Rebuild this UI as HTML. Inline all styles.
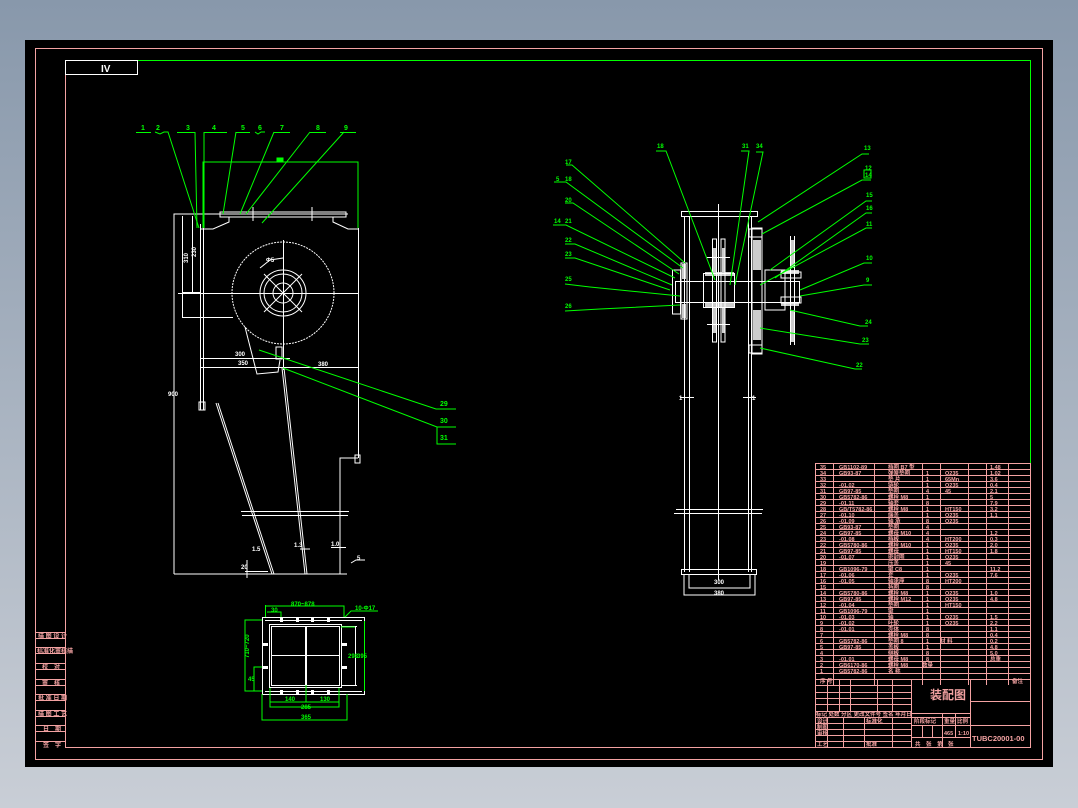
<!DOCTYPE html>
<html><head><meta charset="utf-8"><style>
html,body{margin:0;padding:0;width:1078px;height:808px;overflow:hidden}
svg{display:block}
text{font-family:"Liberation Sans","Noto Sans CJK SC",sans-serif;font-weight:bold}
</style></head><body>
<svg width="1078" height="808" viewBox="0 0 1078 808" xmlns="http://www.w3.org/2000/svg">
<defs>
<linearGradient id="bg" x1="0" y1="0" x2="0" y2="1">
<stop offset="0" stop-color="#8898ab"/><stop offset="1" stop-color="#c9ced6"/>
</linearGradient>
<pattern id="rows" x="0" y="463" width="10" height="6" patternUnits="userSpaceOnUse">
<line x1="0" y1="0.5" x2="10" y2="0.5" stroke="#f4a3a3" stroke-width="1"/>
</pattern>
</defs>
<rect width="1078" height="808" fill="url(#bg)"/>
<rect x="25" y="40" width="1028" height="727" fill="#000"/>
<rect x="35.5" y="48.5" width="1007" height="711" fill="none" stroke="#f4a3a3" stroke-width="1"/>
<line x1="65.5" y1="60" x2="65.5" y2="747" stroke="#f4a3a3"/>
<line x1="65" y1="747.5" x2="1030" y2="747.5" stroke="#f4a3a3"/>
<line x1="1030.5" y1="60" x2="1030.5" y2="747" stroke="#00ff00"/>
<line x1="65" y1="60.5" x2="1031" y2="60.5" stroke="#00ff00"/>
<rect x="65.5" y="60.5" width="72" height="14" fill="none" stroke="#fff"/>
<text x="101" y="72" font-size="10" fill="#fff">IV</text>

<g stroke="#f4a3a3" fill="none">
<line x1="35" y1="632.5" x2="65" y2="632.5"/><line x1="35" y1="638.5" x2="65" y2="638.5"/>
<line x1="35" y1="647.5" x2="65" y2="647.5"/><line x1="35" y1="653.5" x2="65" y2="653.5"/>
<line x1="35" y1="663.5" x2="65" y2="663.5"/><line x1="35" y1="669.5" x2="65" y2="669.5"/>
<line x1="35" y1="679.5" x2="65" y2="679.5"/><line x1="35" y1="685.5" x2="65" y2="685.5"/>
<line x1="35" y1="694.5" x2="65" y2="694.5"/><line x1="35" y1="700.5" x2="65" y2="700.5"/>
<line x1="35" y1="710.5" x2="65" y2="710.5"/><line x1="35" y1="716.5" x2="65" y2="716.5"/>
<line x1="35" y1="725.5" x2="65" y2="725.5"/><line x1="35" y1="731.5" x2="65" y2="731.5"/>
<line x1="35" y1="741.5" x2="65" y2="741.5"/>
</g>
<g font-size="6" fill="#f4a3a3">
<text x="38" y="638">描 图 设 计</text><text x="37" y="653">标准化审核描</text>
<text x="42" y="669">校　对</text><text x="42" y="685">审　核</text>
<text x="38" y="700">批 准 日 期</text><text x="38" y="716">描 图 工 艺</text>
<text x="43" y="731">日　期</text><text x="43" y="747">签　字</text>
</g>

<g stroke="#fff" fill="none" stroke-width="1">
<polyline points="174,574 174,214 348,214"/>
<line x1="174" y1="574" x2="347" y2="574"/>
<rect x="220" y="212" width="126" height="5"/>
<line x1="253" y1="207" x2="253" y2="221"/><line x1="312" y1="207" x2="312" y2="221"/>
<polyline points="229,217 229,222 213,229 200,229"/>
<polyline points="333,217 333,222 348,229 358,229"/>
<line x1="358.5" y1="228" x2="358.5" y2="458"/>
<polyline points="358,458 340,458 340,574"/>
<rect x="355" y="455" width="5" height="8"/>
<line x1="200.5" y1="224" x2="200.5" y2="410"/><line x1="203.5" y1="224" x2="203.5" y2="410"/>
<rect x="199" y="402" width="6" height="8"/>
<line x1="182.5" y1="216" x2="182.5" y2="317"/>
<line x1="182" y1="292.5" x2="200" y2="292.5"/>
<line x1="182" y1="317.5" x2="233" y2="317.5"/>
<line x1="192.5" y1="216" x2="192.5" y2="293"/>
<circle cx="283" cy="293" r="51" stroke-dasharray="2 1"/>
<circle cx="283" cy="293" r="23"/><circle cx="283" cy="293" r="19"/>
<circle cx="283" cy="293" r="10"/>
<line x1="264" y1="274" x2="302" y2="312"/><line x1="302" y1="274" x2="264" y2="312"/>
<line x1="178" y1="293.5" x2="358" y2="293.5"/>
<line x1="283.5" y1="240" x2="283.5" y2="370"/>
<polyline points="260,268 270,260 283,258"/>
<line x1="200" y1="358.5" x2="290" y2="358.5"/>
<line x1="200" y1="367.5" x2="358" y2="367.5"/>
<rect x="276" y="347" width="6" height="12"/>
<polyline points="245,327 257,374 278,372 280,360"/>
<line x1="216" y1="403" x2="272" y2="574"/><line x1="218" y1="403" x2="274" y2="574"/>
<line x1="282" y1="368" x2="305" y2="574"/><line x1="284" y1="368" x2="307" y2="574"/>
<line x1="241" y1="511.5" x2="349" y2="511.5"/><line x1="242" y1="515.5" x2="348" y2="515.5"/>
<line x1="300" y1="549" x2="310" y2="549"/><line x1="331" y1="547.5" x2="346" y2="547.5"/>
<line x1="245" y1="571.5" x2="268" y2="571.5"/><line x1="247" y1="560" x2="247" y2="578"/>
<polyline points="351,563 356,560 365,560"/>
</g>
<g font-size="6" fill="#fff">
<text x="185" y="260" transform="rotate(-90 188 260)">310</text>
<text x="193" y="254" transform="rotate(-90 196 254)">230</text>
<text x="266" y="262">Φ5</text><text x="235" y="356">300</text><text x="238" y="365">350</text>
<text x="318" y="366">380</text><text x="168" y="396">900</text>
<text x="252" y="551">1.5</text><text x="294" y="547">1.3</text><text x="331" y="546">1.0</text>
<text x="241" y="569">20</text><text x="357" y="560">5</text>
</g>
<g stroke="#00ff00" fill="none" stroke-width="1">
<polyline points="203,228 203,162 358,162 358,228"/>
<rect x="277" y="158" width="6" height="4" fill="#00ff00"/>
<line x1="136" y1="132.5" x2="151" y2="132.5"/><polyline points="155,132 160,134 164,132 168,132 199,228"/>
<line x1="177" y1="132.5" x2="195" y2="132.5"/><line x1="195" y1="132" x2="197" y2="228"/>
<line x1="204" y1="132.5" x2="227" y2="132.5"/><line x1="204" y1="132" x2="204" y2="228"/>
<line x1="236" y1="132.5" x2="250" y2="132.5"/><polyline points="255,132 258,134 261,132 265,132"/>
<line x1="236" y1="132" x2="223" y2="214"/>
<line x1="274" y1="132.5" x2="290" y2="132.5"/><line x1="274" y1="132" x2="240" y2="214"/>
<line x1="310" y1="132.5" x2="326" y2="132.5"/><line x1="310" y1="132" x2="246" y2="214"/>
<line x1="340" y1="132.5" x2="356" y2="132.5"/><line x1="344" y1="132" x2="262" y2="223"/>
<polyline points="259,350 436,409 456,409"/>
<polyline points="283,368 437,427 456,427"/>
<polyline points="437,427 437,444 456,444"/>
</g>
<g font-size="7" fill="#00ff00">
<text x="141" y="130">1</text><text x="156" y="130">2</text><text x="186" y="130">3</text>
<text x="212" y="130">4</text><text x="241" y="130">5</text><text x="258" y="130">6</text>
<text x="280" y="130">7</text><text x="316" y="130">8</text><text x="344" y="130">9</text>
<text x="440" y="406">29</text><text x="440" y="423">30</text><text x="440" y="440">31</text>
</g>

<g stroke="#fff" fill="none">
<rect x="262.5" y="617.5" width="102" height="77"/>
<line x1="265" y1="620.5" x2="362" y2="620.5"/><line x1="265" y1="691.5" x2="362" y2="691.5"/>
<rect x="269.5" y="624.5" width="72" height="63"/>
<rect x="271.5" y="626.5" width="68" height="59"/>
<line x1="305.5" y1="626" x2="305.5" y2="686"/><line x1="306.5" y1="626" x2="306.5" y2="686"/>
<line x1="271" y1="655.5" x2="340" y2="655.5"/>
<line x1="341" y1="626.5" x2="357" y2="626.5"/><line x1="355.5" y1="626" x2="355.5" y2="685"/>
<line x1="341" y1="685.5" x2="357" y2="685.5"/>
</g>
<g fill="#fff">
<rect x="280" y="617" width="3" height="5"/><rect x="296" y="617" width="3" height="5"/><rect x="311" y="617" width="3" height="5"/><rect x="327" y="617" width="3" height="5"/>
<rect x="280" y="690" width="3" height="5"/><rect x="296" y="690" width="3" height="5"/><rect x="311" y="690" width="3" height="5"/><rect x="327" y="690" width="3" height="5"/>
<rect x="263" y="643" width="5" height="3"/><rect x="263" y="666" width="5" height="3"/>
<rect x="342" y="643" width="5" height="3"/><rect x="342" y="666" width="5" height="3"/>
</g>
<g stroke="#00ff00" fill="none">
<polyline points="265,606 344,606 344,617"/><line x1="265.5" y1="605" x2="265.5" y2="617"/>
<polyline points="267,612 281,612 281,617"/>
<polyline points="345,617 351,611 378,611"/>
<polyline points="262,620 245,620 245,691 262,691"/>
<polyline points="262,667 254,667 254,691"/>
<polyline points="341,627 355,627"/>
<line x1="364.5" y1="621" x2="364.5" y2="691"/>
<polyline points="270,688 270,707 339,707 339,688"/>
<polyline points="270,702 339,702"/>
<polyline points="262,694 262,720 347,720 347,694"/>
<line x1="306" y1="685" x2="306" y2="702"/>
</g>
<g font-size="6" fill="#00ff00">
<text x="291" y="606">870~878</text><text x="271" y="612">30</text><text x="355" y="610">10-Φ17</text>
<text x="241" y="660" transform="rotate(-90 244 655)">710~720</text>
<text x="248" y="681">45</text>
<text x="348" y="658">298</text><text x="357" y="658">395</text>
<text x="285" y="701">140</text><text x="320" y="701">130</text><text x="301" y="709">285</text><text x="301" y="719">365</text>
</g>

<g stroke="#fff" fill="none">
<rect x="681.5" y="211.5" width="76" height="5"/>
<line x1="684.5" y1="216" x2="684.5" y2="572"/><line x1="689.5" y1="216" x2="689.5" y2="572"/>
<line x1="748.5" y1="216" x2="748.5" y2="572"/><line x1="751.5" y1="216" x2="751.5" y2="572"/>
<line x1="718.5" y1="204" x2="718.5" y2="580"/>
<rect x="675.5" y="281.5" width="124" height="21"/>
<rect x="703.5" y="273.5" width="31" height="34"/>
<rect x="712.5" y="239" width="4" height="103"/><rect x="721" y="239" width="4" height="103"/>
<line x1="707" y1="257.5" x2="730" y2="257.5"/><line x1="707" y1="324.5" x2="730" y2="324.5"/>
<rect x="672.5" y="270" width="8" height="44"/><rect x="681" y="263" width="6" height="56"/>
<rect x="752" y="228" width="10" height="126"/>
<rect x="749" y="229" width="13" height="8"/><rect x="749" y="345" width="13" height="8"/>
<rect x="765" y="270" width="20" height="40"/>
<line x1="790.5" y1="236" x2="790.5" y2="345"/><line x1="794.5" y1="236" x2="794.5" y2="345"/>
<rect x="781" y="272" width="20" height="6"/><rect x="781" y="297" width="20" height="6"/>
<line x1="676" y1="509.5" x2="763" y2="509.5"/><line x1="674" y1="513.5" x2="762" y2="513.5"/>
<line x1="680" y1="397.5" x2="694" y2="397.5"/><line x1="743" y1="397.5" x2="756" y2="397.5"/>
<rect x="681.5" y="569.5" width="75" height="5"/>
<polyline points="684,575 684,595 755,595 755,575"/>
<polyline points="689,575 689,588 750,588 750,575"/>
</g>
<g fill="#fff" opacity="0.8">
<rect x="705" y="303" width="29" height="5"/><rect x="705" y="272" width="29" height="4"/>
<rect x="713" y="248" width="3" height="25"/><rect x="722" y="248" width="3" height="25"/>
<rect x="713" y="308" width="3" height="25"/><rect x="722" y="308" width="3" height="25"/>
<rect x="753" y="240" width="8" height="30"/><rect x="753" y="310" width="8" height="30"/>
<rect x="682" y="264" width="4" height="15"/><rect x="682" y="304" width="4" height="14"/>
<rect x="781" y="270" width="18" height="4"/><rect x="781" y="302" width="18" height="4"/>
<rect x="791" y="240" width="3" height="28"/><rect x="791" y="310" width="3" height="32"/>
</g>
<g font-size="6" fill="#fff"><text x="714" y="584">300</text><text x="714" y="595">380</text><text x="679" y="400">1</text><text x="752" y="400">1</text></g>
<g stroke="#00ff00" fill="none">
<polyline points="566,165 572,165 685,263"/>
<polyline points="554,182 562,182 566,182 683,268"/>
<polyline points="565,203 573,203 679,274"/>
<polyline points="553,225 563,225 566,225 675,278"/>
<polyline points="565,244 575,244 672,285"/>
<polyline points="565,258 575,258 670,290"/>
<polyline points="565,284 590,287 680,296"/>
<polyline points="565,311 600,309 680,305"/>
<polyline points="656,151 666,151 715,280"/>
<polyline points="741,151 749,151 730,285"/>
<polyline points="756,152 763,152 735,285"/>
<polyline points="869,154 862,154 758,222"/>
<polyline points="871,180 862,180 762,234"/>
<polyline points="872,201 866,201 770,270"/>
<polyline points="872,213 866,213 775,278"/>
<polyline points="872,228 866,228 760,285"/>
<polyline points="872,263 864,263 800,290"/>
<polyline points="872,285 864,285 800,296"/>
<polyline points="868,326 860,326 790,310"/>
<polyline points="869,344 860,344 760,328"/>
<polyline points="862,369 855,369 760,348"/>
<rect x="864" y="170" width="7" height="8"/>
</g>
<g font-size="6" fill="#00ff00">
<text x="565" y="164">17</text><text x="556" y="181">5</text><text x="565" y="181">18</text>
<text x="565" y="202">20</text><text x="554" y="223">14</text><text x="565" y="223">21</text>
<text x="565" y="242">22</text><text x="565" y="256">23</text><text x="565" y="281">25</text><text x="565" y="308">26</text>
<text x="657" y="148">18</text><text x="742" y="148">31</text><text x="756" y="148">34</text>
<text x="864" y="150">13</text><text x="865" y="170">12</text><text x="865" y="177">14</text>
<text x="866" y="197">15</text><text x="866" y="210">16</text><text x="866" y="226">11</text>
<text x="866" y="260">10</text><text x="866" y="282">9</text><text x="865" y="324">24</text>
<text x="862" y="342">23</text><text x="856" y="367">22</text>
</g>

<rect x="815" y="463" width="215" height="216" fill="url(#rows)"/>
<g stroke="#f4a3a3" fill="none">
<rect x="815.5" y="463.5" width="215" height="284"/>
<line x1="833.5" y1="463" x2="833.5" y2="685"/>
<line x1="874.5" y1="463" x2="874.5" y2="685"/>
<line x1="922.5" y1="463" x2="922.5" y2="685"/>
<line x1="940.5" y1="463" x2="940.5" y2="685"/>
<line x1="968.5" y1="463" x2="968.5" y2="685"/>
<line x1="986.5" y1="463" x2="986.5" y2="685"/>
<line x1="1008.5" y1="463" x2="1008.5" y2="685"/>
<line x1="815" y1="679.5" x2="1030" y2="679.5"/>
<line x1="815" y1="685.5" x2="911" y2="685.5"/>
<line x1="815" y1="692.5" x2="911" y2="692.5"/>
<line x1="815" y1="698.5" x2="911" y2="698.5"/>
<line x1="815" y1="704.5" x2="911" y2="704.5"/>
<line x1="815" y1="711.5" x2="911" y2="711.5"/>
<line x1="815" y1="717.5" x2="970" y2="717.5"/>
<line x1="815" y1="723.5" x2="911" y2="723.5"/>
<line x1="815" y1="729.5" x2="911" y2="729.5"/>
<line x1="815" y1="735.5" x2="911" y2="735.5"/>
<line x1="815" y1="741.5" x2="911" y2="741.5"/>
<line x1="827.5" y1="679" x2="827.5" y2="711"/><line x1="839.5" y1="679" x2="839.5" y2="711"/>
<line x1="850.5" y1="679" x2="850.5" y2="711"/><line x1="877.5" y1="679" x2="877.5" y2="711"/>
<line x1="892.5" y1="679" x2="892.5" y2="711"/>
<line x1="827.5" y1="717" x2="827.5" y2="747"/><line x1="843.5" y1="717" x2="843.5" y2="747"/>
<line x1="864.5" y1="717" x2="864.5" y2="747"/><line x1="892.5" y1="717" x2="892.5" y2="747"/>
<line x1="911.5" y1="679" x2="911.5" y2="747"/>
<line x1="970.5" y1="679" x2="970.5" y2="747"/>
<line x1="970" y1="701.5" x2="1030" y2="701.5"/>
<line x1="911" y1="713.5" x2="970" y2="713.5"/>
<line x1="911" y1="725.5" x2="1030" y2="725.5"/>
<line x1="911" y1="737.5" x2="970" y2="737.5"/>
<line x1="942.5" y1="713" x2="942.5" y2="747"/><line x1="955.5" y1="713" x2="955.5" y2="737"/>
<line x1="922.5" y1="725" x2="922.5" y2="737"/><line x1="932.5" y1="725" x2="932.5" y2="737"/>
</g>
<g font-size="5.5" fill="#f4a3a3">
<text x="820" y="469"><tspan x="820">35</tspan><tspan x="820" dy="6">34</tspan><tspan x="820" dy="6">33</tspan><tspan x="820" dy="6">32</tspan><tspan x="820" dy="6">31</tspan><tspan x="820" dy="6">30</tspan><tspan x="820" dy="6">29</tspan><tspan x="820" dy="6">28</tspan><tspan x="820" dy="6">27</tspan><tspan x="820" dy="6">26</tspan><tspan x="820" dy="6">25</tspan><tspan x="820" dy="6">24</tspan><tspan x="820" dy="6">23</tspan><tspan x="820" dy="6">22</tspan><tspan x="820" dy="6">21</tspan><tspan x="820" dy="6">20</tspan><tspan x="820" dy="6">19</tspan><tspan x="820" dy="6">18</tspan><tspan x="820" dy="6">17</tspan><tspan x="820" dy="6">16</tspan><tspan x="820" dy="6">15</tspan><tspan x="820" dy="6">14</tspan><tspan x="820" dy="6">13</tspan><tspan x="820" dy="6">12</tspan><tspan x="820" dy="6">11</tspan><tspan x="820" dy="6">10</tspan><tspan x="820" dy="6">9</tspan><tspan x="820" dy="6">8</tspan><tspan x="820" dy="6">7</tspan><tspan x="820" dy="6">6</tspan><tspan x="820" dy="6">5</tspan><tspan x="820" dy="6">4</tspan><tspan x="820" dy="6">3</tspan><tspan x="820" dy="6">2</tspan><tspan x="820" dy="6">1</tspan></text>
<text x="839" y="469"><tspan x="839">GB1102-89</tspan><tspan x="839" dy="6">GB93-87</tspan><tspan x="839" dy="12">-01.02</tspan><tspan x="839" dy="6">GB97-85</tspan><tspan x="839" dy="6">GB5782-86</tspan><tspan x="839" dy="6">-01.11</tspan><tspan x="839" dy="6">GB/T5782-86</tspan><tspan x="839" dy="6">-01.10</tspan><tspan x="839" dy="6">-01.09</tspan><tspan x="839" dy="6">GB93-87</tspan><tspan x="839" dy="6">GB97-85</tspan><tspan x="839" dy="6">-01.08</tspan><tspan x="839" dy="6">GB5780-86</tspan><tspan x="839" dy="6">GB97-85</tspan><tspan x="839" dy="6">-01.07</tspan><tspan x="839" dy="12">GB1096-79</tspan><tspan x="839" dy="6">-01.06</tspan><tspan x="839" dy="6">-01.05</tspan><tspan x="839" dy="12">GB5780-86</tspan><tspan x="839" dy="6">GB97-85</tspan><tspan x="839" dy="6">-01.04</tspan><tspan x="839" dy="6">GB1096-79</tspan><tspan x="839" dy="6">-01.03</tspan><tspan x="839" dy="6">-01.02</tspan><tspan x="839" dy="6">-01.01</tspan><tspan x="839" dy="12">GB5782-86</tspan><tspan x="839" dy="6">GB97-85</tspan><tspan x="839" dy="12">-01.01</tspan><tspan x="839" dy="6">GB6170-86</tspan><tspan x="839" dy="6">GB5782-86</tspan></text>
<text x="888" y="469"><tspan x="888">挡圈 B7 型</tspan><tspan x="888" dy="6">弹簧垫圈</tspan><tspan x="888" dy="6">垫 片</tspan><tspan x="888" dy="6">链轮</tspan><tspan x="888" dy="6">垫圈</tspan><tspan x="888" dy="6">螺栓 M8</tspan><tspan x="888" dy="6">轴套</tspan><tspan x="888" dy="6">螺栓 M8</tspan><tspan x="888" dy="6">端盖</tspan><tspan x="888" dy="6">轴 承</tspan><tspan x="888" dy="6">垫圈</tspan><tspan x="888" dy="6">螺母 M10</tspan><tspan x="888" dy="6">挡板</tspan><tspan x="888" dy="6">螺栓 M10</tspan><tspan x="888" dy="6">螺母</tspan><tspan x="888" dy="6">密封圈</tspan><tspan x="888" dy="6">压盖</tspan><tspan x="888" dy="6">键 C8</tspan><tspan x="888" dy="6">套</tspan><tspan x="888" dy="6">轴承座</tspan><tspan x="888" dy="6">毡圈</tspan><tspan x="888" dy="6">螺栓 M8</tspan><tspan x="888" dy="6">螺栓 M12</tspan><tspan x="888" dy="6">垫圈</tspan><tspan x="888" dy="6">键</tspan><tspan x="888" dy="6">轴</tspan><tspan x="888" dy="6">叶轮</tspan><tspan x="888" dy="6">壳体</tspan><tspan x="888" dy="6">螺栓 M8</tspan><tspan x="888" dy="6">垫圈 8</tspan><tspan x="888" dy="6">盖板</tspan><tspan x="888" dy="6">侧板</tspan><tspan x="888" dy="6">螺母 M8</tspan><tspan x="888" dy="6">螺栓 M8</tspan><tspan x="888" dy="6">名 称</tspan></text>
<text x="926" y="475"><tspan x="926">1</tspan><tspan x="926" dy="6">1</tspan><tspan x="926" dy="6">1</tspan><tspan x="926" dy="6">4</tspan><tspan x="926" dy="6">1</tspan><tspan x="926" dy="6">8</tspan><tspan x="926" dy="6">1</tspan><tspan x="926" dy="6">1</tspan><tspan x="926" dy="6">8</tspan><tspan x="926" dy="6">4</tspan><tspan x="926" dy="6">4</tspan><tspan x="926" dy="6">4</tspan><tspan x="926" dy="6">1</tspan><tspan x="926" dy="6">1</tspan><tspan x="926" dy="6">1</tspan><tspan x="926" dy="6">1</tspan><tspan x="926" dy="6">1</tspan><tspan x="926" dy="6">1</tspan><tspan x="926" dy="6">8</tspan><tspan x="926" dy="6">8</tspan><tspan x="926" dy="6">1</tspan><tspan x="926" dy="6">1</tspan><tspan x="926" dy="6">1</tspan><tspan x="926" dy="6">1</tspan><tspan x="926" dy="6">1</tspan><tspan x="926" dy="6">1</tspan><tspan x="926" dy="6">8</tspan><tspan x="926" dy="6">8</tspan><tspan x="926" dy="6">1</tspan><tspan x="926" dy="6">1</tspan><tspan x="926" dy="6">8</tspan><tspan x="926" dy="6">8</tspan><tspan x="922" dy="6">数量</tspan></text>
<text x="945" y="475"><tspan x="945">Q235</tspan><tspan x="945" dy="6">65Mn</tspan><tspan x="945" dy="6">Q235</tspan><tspan x="945" dy="6">45</tspan><tspan x="945" dy="18">HT150</tspan><tspan x="945" dy="6">Q235</tspan><tspan x="945" dy="6">Q235</tspan><tspan x="945" dy="18">HT200</tspan><tspan x="945" dy="6">Q235</tspan><tspan x="945" dy="6">HT150</tspan><tspan x="945" dy="6">Q235</tspan><tspan x="945" dy="6">45</tspan><tspan x="945" dy="12">Q235</tspan><tspan x="945" dy="6">HT200</tspan><tspan x="945" dy="12">Q235</tspan><tspan x="945" dy="6">Q235</tspan><tspan x="945" dy="6">HT150</tspan><tspan x="945" dy="12">Q235</tspan><tspan x="945" dy="6">Q235</tspan><tspan x="940" dy="18">材 料</tspan></text>
<text x="990" y="469"><tspan x="990">1.48</tspan><tspan x="990" dy="6">1.02</tspan><tspan x="990" dy="6">3.6</tspan><tspan x="990" dy="6">0.4</tspan><tspan x="990" dy="6">2.1</tspan><tspan x="990" dy="6">5</tspan><tspan x="990" dy="6">7.9</tspan><tspan x="990" dy="6">3.2</tspan><tspan x="990" dy="6">1.1</tspan><tspan x="990" dy="18">1.2</tspan><tspan x="990" dy="6">0.3</tspan><tspan x="990" dy="6">2.0</tspan><tspan x="990" dy="6">1.8</tspan><tspan x="990" dy="18">11.2</tspan><tspan x="990" dy="6">7.6</tspan><tspan x="990" dy="18">1.0</tspan><tspan x="990" dy="6">4.8</tspan><tspan x="990" dy="18">1.5</tspan><tspan x="990" dy="6">2.2</tspan><tspan x="990" dy="6">1.1</tspan><tspan x="990" dy="6">0.4</tspan><tspan x="990" dy="6">0.2</tspan><tspan x="990" dy="6">4.8</tspan><tspan x="990" dy="6">5.0</tspan><tspan x="990" dy="6">总重</tspan></text>
<text x="1012" y="683">备注</text>
<text x="820" y="683">序 号</text>
<text x="816" y="716">标记 处数 分区 更改文件号 签名 年月日</text>
<text x="817" y="723">设计</text><text x="817" y="729">制图</text><text x="817" y="735">审核</text><text x="817" y="746">工艺</text>
<text x="866" y="723">标准化</text><text x="866" y="746">批准</text>
<text x="914" y="723">阶段标记</text><text x="944" y="723">重量</text><text x="957" y="723">比例</text>
<text x="944" y="735">465</text><text x="958" y="735">1:10</text>
<text x="915" y="746">共　张　第　张</text>
</g>
<text x="930" y="699" font-size="12" fill="#f4a3a3">装配图</text>
<text x="972" y="741" font-size="7.5" fill="#f4a3a3" font-weight="normal">TUBC20001-00</text>
</svg>
</body></html>
